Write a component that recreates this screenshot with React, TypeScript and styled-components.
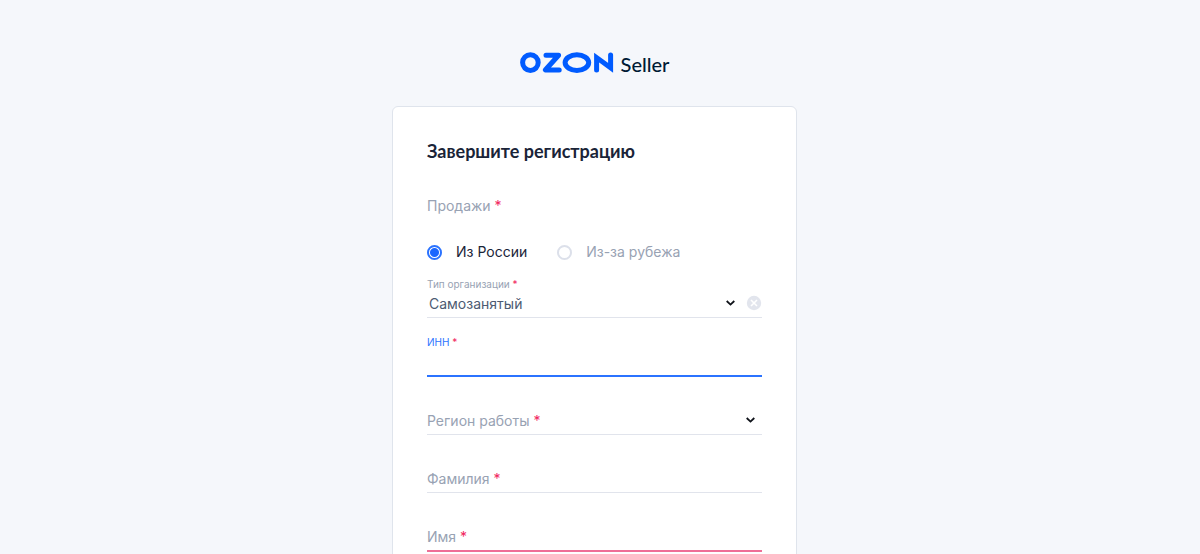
import React, { useState } from "react";
import styled, { createGlobalStyle, css } from "styled-components";

const color = {
  page: "#f5f7fb",
  border: "#dfe4ec",
  blue: "#005bff",
  accent: "#2b73ff",
  ink: "#1a2438",
  value: "#4d5b72",
  muted: "#98a2b3",
  line: "#e1e4ec",
  red: "#f1255d",
  error: "#ee6f97",
};

const GlobalStyle = createGlobalStyle`
  *, *::before, *::after { box-sizing: border-box; }
  html { background: ${color.page}; }
  body {
    margin: 0;
    font-family: Inter, "Liberation Sans", sans-serif;
    font-size: 14px;
    color: ${color.ink};
  }
`;

const Page = styled.main`
  display: flex;
  flex-direction: column;
  align-items: center;
  gap: 30px;
  padding: 50px 11px 48px 0;
`;

const Brand = styled.a`
  display: flex;
  align-items: center;
  gap: 7px;
  color: #001a34;
  text-decoration: none;
`;

const BrandMark = styled.svg`
  display: block;
  width: 94px;
  height: 26px;
`;

const BrandSub = styled.span`
  font: 500 20px/26px Lato, "Liberation Sans", sans-serif;
  padding-top: 1px;
  margin-bottom: -1px;
`;

const Card = styled.form`
  width: 100%;
  max-width: 405px;
  padding: 34px;
  background: #fff;
  border: 1px solid ${color.border};
  border-radius: 6px;
`;

const Title = styled.h1`
  margin: 0 0 35px;
  font: 700 18px/20px Lato, "Liberation Sans", sans-serif;
`;

const Origin = styled.fieldset`
  margin: 0;
  padding: 0;
  border: 0;
`;

const OriginLegend = styled.legend`
  padding: 0;
  line-height: 20px;
  color: ${color.muted};
`;

const OriginOptions = styled.div`
  display: flex;
  gap: 30px;
  padding: 26px 0 15px;
`;

const OriginOption = styled.label<{ $active: boolean }>`
  display: flex;
  align-items: center;
  gap: 14px;
  line-height: 20px;
  color: ${(p) => (p.$active ? color.ink : color.muted)};
`;

const Radio = styled.input`
  appearance: none;
  width: 15px;
  height: 15px;
  margin: 0;
  border: 2px solid #dce0ea;
  border-radius: 50%;
  background: #fff;
  &:checked {
    border-color: ${color.accent};
    background: radial-gradient(circle, #1a66ff 4px, #fff 5px);
  }
`;

const Star = styled.span`
  color: ${color.red};
`;

type FieldState = "idle" | "focus" | "error";

const lineStyle = {
  idle: `1px solid ${color.line}`,
  focus: `2px solid ${color.accent}`,
  error: `2px solid ${color.error}`,
};

const Field = styled.div<{ $state: FieldState }>`
  display: grid;
  grid-template-columns: 1fr auto;
  grid-template-rows: 14px 26px;
  padding-top: 17px;
  border-bottom: ${(p) => lineStyle[p.$state]};
`;

const FirstField = styled(Field)`
  padding-top: 0;
`;

const FieldLabel = styled.label<{ $raised?: boolean; $active?: boolean }>`
  z-index: 1;
  grid-column: 1;
  color: ${(p) => (p.$active ? color.accent : color.muted)};
  pointer-events: none;
  ${(p) =>
    p.$raised
      ? css`
          grid-row: 1;
          font-size: 10px;
          line-height: 14px;
        `
      : css`
          grid-row: 2;
          line-height: 26px;
        `}
`;

const control = css`
  grid-area: 2 / 1 / 3 / 3;
  min-width: 0;
  width: 100%;
  height: 26px;
  margin: 0;
  padding: 0 2px 2px;
  border: 0;
  outline: 0;
  background: transparent;
  color: ${color.value};
  font: inherit;
`;

const Input = styled.input`
  ${control}
`;

const Select = styled.select`
  ${control}
  appearance: none;
`;

const Actions = styled.span`
  grid-area: 2 / 2 / 3 / 3;
  z-index: 1;
  display: flex;
  align-items: center;
  gap: 10px;
  padding-bottom: 2px;
  pointer-events: none;
`;

const SoloAction = styled(Actions)`
  padding-right: 6px;
`;

const ClearButton = styled.button`
  display: block;
  width: 16px;
  height: 16px;
  padding: 0;
  border: 0;
  background: transparent;
  pointer-events: auto;
  svg {
    display: block;
  }
`;

const Chevron = () => (
  <svg width="11" height="8" viewBox="0 0 11 8" aria-hidden="true">
    <path d="M1.7 2 5.5 5.6 9.3 2" fill="none" stroke="#10131a" strokeWidth="1.8" />
  </svg>
);

const Logo = () => (
  <BrandMark viewBox="0 0 94 26" aria-hidden="true">
    <g fill="none" stroke={color.blue} strokeWidth="5" strokeLinecap="round" strokeLinejoin="round">
      <circle cx="10.4" cy="12.6" r="7.8" />
      <path d="M26 5.3H38.6L25.3 20H39.2" />
      <ellipse cx="56.9" cy="12.6" rx="11.8" ry="7.8" />
      <path d="M76.6 20.1V7.6L90.6 17.8V5.1" strokeLinejoin="miter" strokeMiterlimit="3" />
    </g>
  </BrandMark>
);

const Required = () => <Star>*</Star>;

export default function App() {
  const [origin, setOrigin] = useState("ru");
  const [org, setOrg] = useState("self");
  const [region, setRegion] = useState("");

  return (
    <>
      <GlobalStyle />
      <Page>
        <Brand href="#" aria-label="Ozon Seller">
          <Logo />
          <BrandSub>Seller</BrandSub>
        </Brand>
        <Card>
          <Title>Завершите регистрацию</Title>
          <Origin>
            <OriginLegend>
              Продажи <Required />
            </OriginLegend>
            <OriginOptions>
              <OriginOption $active={origin === "ru"}>
                <Radio type="radio" name="origin" checked={origin === "ru"} onChange={() => setOrigin("ru")} />
                Из России
              </OriginOption>
              <OriginOption $active={origin === "abroad"}>
                <Radio type="radio" name="origin" checked={origin === "abroad"} onChange={() => setOrigin("abroad")} />
                Из-за рубежа
              </OriginOption>
            </OriginOptions>
          </Origin>
          <FirstField $state="idle">
            <FieldLabel htmlFor="org" $raised>
              Тип организации <Required />
            </FieldLabel>
            <Select id="org" value={org} onChange={(e) => setOrg(e.target.value)}>
              <option value="" />
              <option value="self">Самозанятый</option>
            </Select>
            <Actions>
              <Chevron />
              <ClearButton type="button" aria-label="Очистить" onClick={() => setOrg("")}>
                <svg width="16" height="16" viewBox="0 0 16 16" aria-hidden="true">
                  <circle cx="8" cy="8" r="7.2" fill="#e2e5ed" />
                  <path d="m5 5 6 6m0-6-6 6" stroke="#fff" strokeWidth="1.6" />
                </svg>
              </ClearButton>
            </Actions>
          </FirstField>
          <Field $state="focus">
            <FieldLabel htmlFor="inn" $raised $active>
              ИНН <Required />
            </FieldLabel>
            <Input id="inn" inputMode="numeric" />
          </Field>
          <Field $state="idle">
            <FieldLabel htmlFor="region">
              Регион работы <Required />
            </FieldLabel>
            <Select id="region" value={region} onChange={(e) => setRegion(e.target.value)}>
              <option value="" />
            </Select>
            <SoloAction>
              <Chevron />
            </SoloAction>
          </Field>
          <Field $state="idle">
            <FieldLabel htmlFor="surname">
              Фамилия <Required />
            </FieldLabel>
            <Input id="surname" />
          </Field>
          <Field $state="error">
            <FieldLabel htmlFor="name">
              Имя <Required />
            </FieldLabel>
            <Input id="name" />
          </Field>
        </Card>
      </Page>
    </>
  );
}
